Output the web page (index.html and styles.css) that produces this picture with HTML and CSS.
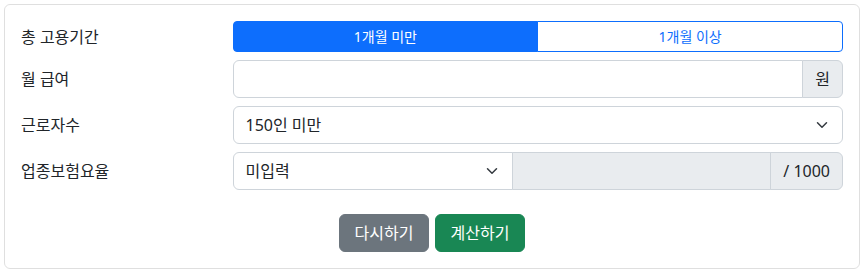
FILE: index.html
```html
<!DOCTYPE html>
<html lang="ko">
<head>
  <meta charset="UTF-8">
  <meta name="viewport" content="width=device-width, initial-scale=1.0">
  <title>실업급여 계산기</title>
  <link rel="stylesheet" href="styles.css">
</head>
<body>
  <div class="card">
    <div class="form-row">
      <label class="form-label">총 고용기간</label>
      <div class="form-field">
        <div class="btn-group">
          <button type="button" class="toggle active">1개월 미만</button>
          <button type="button" class="toggle">1개월 이상</button>
        </div>
      </div>
    </div>
    <div class="form-row">
      <label class="form-label" for="salary">월 급여</label>
      <div class="form-field">
        <div class="input-group">
          <input type="text" id="salary" class="form-control">
          <span class="input-addon">원</span>
        </div>
      </div>
    </div>
    <div class="form-row">
      <label class="form-label" for="workers">근로자수</label>
      <div class="form-field">
        <div class="select-wrap">
          <select id="workers" class="form-select">
            <option>150인 미만</option>
            <option>150인 이상</option>
          </select>
          <svg class="chevron" width="12" height="12" viewBox="0 0 16 16"><path d="M2 5l6 6 6-6" fill="none" stroke="#343a40" stroke-width="2" stroke-linecap="round" stroke-linejoin="round"/></svg>
        </div>
      </div>
    </div>
    <div class="form-row">
      <label class="form-label" for="rate-type">업종보험요율</label>
      <div class="form-field">
        <div class="input-group">
          <div class="select-wrap rate-select">
            <select id="rate-type" class="form-select">
              <option>미입력</option>
              <option>직접입력</option>
            </select>
            <svg class="chevron" width="12" height="12" viewBox="0 0 16 16"><path d="M2 5l6 6 6-6" fill="none" stroke="#343a40" stroke-width="2" stroke-linecap="round" stroke-linejoin="round"/></svg>
          </div>
          <input type="text" class="form-control" disabled>
          <span class="input-addon">/ 1000</span>
        </div>
      </div>
    </div>
    <div class="actions">
      <button type="button" class="btn btn-reset">다시하기</button>
      <button type="button" class="btn btn-calc">계산하기</button>
    </div>
  </div>
</body>
</html>
```

FILE: styles.css
```css
* {
  box-sizing: border-box;
}

body {
  margin: 4px 6px 4px 4px;
  font-family: "Noto Sans", "Noto Sans CJK KR", sans-serif;
  font-size: 16px;
  line-height: 1.5;
  color: #212529;
  background: #fff;
}

.card {
  border: 1px solid rgba(0, 0, 0, 0.125);
  border-radius: 6px;
  padding: 16px;
}

.form-row {
  display: flex;
  align-items: center;
  margin-bottom: 8px;
}

.form-label {
  width: 199.5px;
  flex: none;
  padding-right: 12px;
}

.form-field {
  flex: 1;
  min-width: 0;
  padding-left: 12px;
}

.btn-group {
  display: flex;
}

.toggle {
  flex: 1;
  height: 31px;
  padding: 4px 8px;
  font: inherit;
  font-size: 14px;
  line-height: 1.5;
  color: #0d6efd;
  background: #fff;
  border: 1px solid #0d6efd;
  cursor: pointer;
}

.toggle:first-child {
  border-radius: 4px 0 0 4px;
}

.toggle:last-child {
  border-radius: 0 4px 4px 0;
  margin-left: -1px;
}

.toggle.active {
  color: #fff;
  background: #0d6efd;
}

.input-group {
  display: flex;
  align-items: stretch;
}

.form-control,
.form-select {
  display: block;
  width: 100%;
  height: 38px;
  padding: 6px 12px;
  font: inherit;
  color: #212529;
  background: #fff;
  border: 1px solid #ced4da;
  border-radius: 6px;
  outline: none;
}

.input-group .form-control {
  flex: 1;
  min-width: 0;
  border-radius: 6px 0 0 6px;
}

.form-control:disabled {
  background: #e9ecef;
}

.form-select {
  appearance: none;
  padding-right: 36px;
}

.select-wrap {
  position: relative;
}

.chevron {
  position: absolute;
  right: 15px;
  top: 13px;
  pointer-events: none;
}

.rate-select {
  width: 280px;
  flex: none;
}

.rate-select .form-select {
  border-radius: 6px 0 0 6px;
}

.rate-select + .form-control {
  border-radius: 0;
  margin-left: -1px;
}

.input-addon {
  display: flex;
  align-items: center;
  padding: 6px 12px;
  margin-left: -1px;
  white-space: nowrap;
  background: #e9ecef;
  border: 1px solid #ced4da;
  border-radius: 0 6px 6px 0;
}

.actions {
  display: flex;
  justify-content: center;
  gap: 6px;
  margin-top: 24px;
}

.btn {
  height: 38px;
  min-width: 90px;
  padding: 6px 12px;
  font: inherit;
  color: #fff;
  border: 1px solid transparent;
  border-radius: 6px;
  cursor: pointer;
}

.btn-reset {
  background: #6c757d;
  border-color: #6c757d;
}

.btn-calc {
  background: #198754;
  border-color: #198754;
}
```
